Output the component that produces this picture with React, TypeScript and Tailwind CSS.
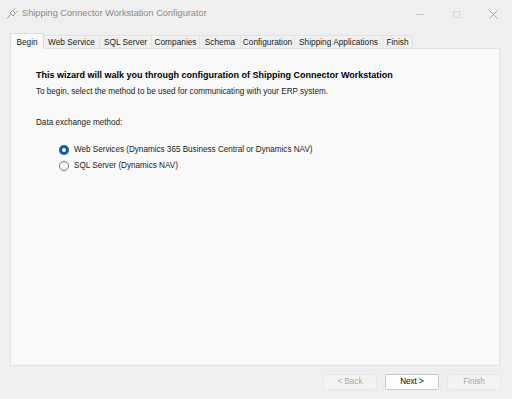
import React from "react";

const tabs = [
  { label: "Begin", w: 34 },
  { label: "Web Service", w: 56 },
  { label: "SQL Server", w: 52 },
  { label: "Companies", w: 48 },
  { label: "Schema", w: 41 },
  { label: "Configuration", w: 54 },
  { label: "Shipping Applications", w: 88 },
  { label: "Finish", w: 30 },
];

function PlugIcon() {
  return (
    <svg width="12" height="12" viewBox="0 0 12 12" fill="none" stroke="#9a9a9a" strokeWidth="1">
      <path d="M6.5 2.5 L9.5 5.5 L7 8 L4 5 Z" />
      <path d="M7.5 2 L9 0.5 M10 4.5 L11.5 3" />
      <path d="M4.5 6.5 L1 10.5" />
    </svg>
  );
}

function Radio({ checked }: { checked: boolean }) {
  return checked ? (
    <span className="w-[10px] h-[10px] rounded-full bg-[#0b5cad] flex items-center justify-center shrink-0">
      <span className="w-[4px] h-[4px] rounded-full bg-white" />
    </span>
  ) : (
    <span className="w-[10px] h-[10px] rounded-full border border-[#7a7a7a] bg-[#f7f7f7] shrink-0" />
  );
}

export default function App() {
  return (
    <div
      className="w-[512px] h-[399px] bg-[#efefef] flex flex-col text-[#1a1a1a]"
      style={{ fontFamily: '"Liberation Sans", Arial, sans-serif' }}
    >
      {/* Title bar */}
      <div className="h-[28px] flex items-center pl-[6px] shrink-0">
        <PlugIcon />
        <span className="ml-[4px] text-[9.2px] text-[#8c8c8c]">Shipping Connector Workstation Configurator</span>
        <div className="ml-auto flex items-center h-full">
          <div className="w-[36px] h-full flex items-center justify-center">
            <span className="w-[8px] h-px bg-[#c4c4c4]" />
          </div>
          <div className="w-[36px] h-full flex items-center justify-center">
            <span className="w-[7px] h-[7px] border border-[#d6d6d6]" />
          </div>
          <div className="w-[38px] h-full flex items-center justify-center">
            <svg width="9" height="9" viewBox="0 0 9 9" stroke="#9e9e9e" strokeWidth="0.9">
              <path d="M0.5 0.5 L8.5 8.5 M8.5 0.5 L0.5 8.5" />
            </svg>
          </div>
        </div>
      </div>

      {/* Tabs + panel */}
      <div className="pl-[10px] pr-[12px] pt-[5px] flex flex-col">
        <div className="flex items-end h-[15px] relative z-10">
          {tabs.map((t, i) =>
            i === 0 ? (
              <div
                key={t.label}
                style={{ width: t.w }}
                className="h-[16px] -mb-px bg-[#f9f9f9] border border-b-0 border-[#dcdcdc] flex items-start justify-center pt-[2px] text-[8.3px] shrink-0"
              >
                {t.label}
              </div>
            ) : (
              <div
                key={t.label}
                style={{ width: t.w }}
                className="h-[13px] bg-[#f0f0f0] border border-b-0 border-l-0 border-[#e2e2e2] flex items-center justify-center text-[8.3px] shrink-0 whitespace-nowrap"
              >
                {t.label}
              </div>
            )
          )}
        </div>
        <div className="h-[318px] bg-[#f9f9f9] border border-[#e3e3e3] pl-[25px] pt-[21px] text-[8.15px] leading-[10px]">
          <div className="font-bold text-[9px] text-black">
            This wizard will walk you through configuration of Shipping Connector Workstation
          </div>
          <div className="mt-[7px]">
            To begin, select the method to be used for communicating with your ERP system.
          </div>
          <div className="mt-[21px]">Data exchange method:</div>
          <div className="mt-[17px] pl-[23px] flex flex-col gap-[6px]">
            <div className="flex items-center gap-[5px]">
              <Radio checked />
              <span>Web Services (Dynamics 365 Business Central or Dynamics NAV)</span>
            </div>
            <div className="flex items-center gap-[5px]">
              <Radio checked={false} />
              <span>SQL Server (Dynamics NAV)</span>
            </div>
          </div>
        </div>
      </div>

      {/* Buttons */}
      <div className="flex justify-end gap-[8px] pr-[11px] mt-[8px] text-[8.15px]">
        <div className="w-[54px] h-[16px] rounded-[3px] bg-[#f3f3f3] border border-[#e8e8e8] flex items-center justify-center text-[#a8a8a8]">
          &lt; Back
        </div>
        <div className="w-[54px] h-[16px] rounded-[3px] bg-[#fdfdfd] border border-[#c9c9c9] flex items-center justify-center text-black">
          Next &gt;
        </div>
        <div className="w-[54px] h-[16px] rounded-[3px] bg-[#f3f3f3] border border-[#e8e8e8] flex items-center justify-center text-[#a8a8a8]">
          Finish
        </div>
      </div>
    </div>
  );
}
